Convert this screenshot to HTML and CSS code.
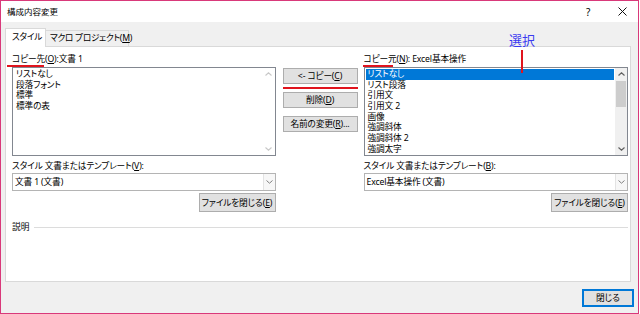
FILE: index.html
```html
<!DOCTYPE html>
<html lang="ja">
<head>
<meta charset="utf-8">
<title>構成内容変更</title>
<link rel="stylesheet" href="styles.css">
</head>
<body>
<div class="window">
  <div class="titlebar">
    <span class="title">構成内容変更</span>
    <span class="help">?</span>
    <span class="close"><svg width="9" height="9" viewBox="0 0 9 9"><path d="M0.5 0.5L8.5 8.5M8.5 0.5L0.5 8.5" stroke="#111" stroke-width="1"/></svg></span>
  </div>
  <div class="body">
    <div class="tabs">
      <div class="tab active">スタイル</div>
      <div class="tab">マクロ プロジェクト(<u>M</u>)</div>
    </div>
    <div class="panel">
      <div class="columns">
        <div class="col side">
          <div class="lbl">コピー先(<u>O</u>):文書 1</div>
          <div class="list">
            <div class="items">
              <div class="item">リストなし</div>
              <div class="item">段落フォント</div>
              <div class="item">標準</div>
              <div class="item">標準の表</div>
            </div>
            <div class="sbar disabled">
              <div class="arrow"><svg width="7" height="4" viewBox="0 0 7 4"><path d="M0.5 3.5L3.5 0.8L6.5 3.5" fill="none" stroke="#c8c8c8" stroke-width="1.1"/></svg></div>
              <div class="track"></div>
              <div class="arrow"><svg width="7" height="4" viewBox="0 0 7 4"><path d="M0.5 0.5L3.5 3.2L6.5 0.5" fill="none" stroke="#c8c8c8" stroke-width="1.1"/></svg></div>
            </div>
          </div>
          <div class="lbl2">スタイル 文書またはテンプレート(<u>V</u>):</div>
          <div class="combo">
            <span class="combo-text">文書 1 (文書)</span>
            <span class="combo-btn"><svg width="7" height="4" viewBox="0 0 7 4"><path d="M0.5 0.5L3.5 3.2L6.5 0.5" fill="none" stroke="#808080" stroke-width="1"/></svg></span>
          </div>
          <div class="btnrow"><button class="btn file">ファイルを閉じる(<u>E</u>)</button></div>
        </div>
        <div class="col mid">
          <button class="btn act">&lt;- コピー(<u>C</u>)</button>
          <button class="btn act">削除(<u>D</u>)</button>
          <button class="btn act">名前の変更(<u>R</u>)...</button>
        </div>
        <div class="col side right">
          <div class="lbl">コピー元(<u>N</u>): Excel基本操作</div>
          <div class="list">
            <div class="items">
              <div class="item sel">リストなし</div>
              <div class="item">リスト段落</div>
              <div class="item">引用文</div>
              <div class="item">引用文 2</div>
              <div class="item">画像</div>
              <div class="item">強調斜体</div>
              <div class="item">強調斜体 2</div>
              <div class="item">強調太字</div>
            </div>
            <div class="sbar">
              <div class="arrow"><svg width="7" height="4" viewBox="0 0 7 4"><path d="M0.5 3.5L3.5 0.8L6.5 3.5" fill="none" stroke="#606060" stroke-width="1.2"/></svg></div>
              <div class="track"><div class="thumb"></div></div>
              <div class="arrow"><svg width="7" height="4" viewBox="0 0 7 4"><path d="M0.5 0.5L3.5 3.2L6.5 0.5" fill="none" stroke="#606060" stroke-width="1.2"/></svg></div>
            </div>
          </div>
          <div class="lbl2">スタイル 文書またはテンプレート(<u>B</u>):</div>
          <div class="combo">
            <span class="combo-text">Excel基本操作 (文書)</span>
            <span class="combo-btn"><svg width="7" height="4" viewBox="0 0 7 4"><path d="M0.5 0.5L3.5 3.2L6.5 0.5" fill="none" stroke="#808080" stroke-width="1"/></svg></span>
          </div>
          <div class="btnrow"><button class="btn file">ファイルを閉じる(<u>E</u>)</button></div>
        </div>
      </div>
      <div class="desc">
        <span class="desc-lbl">説明</span>
        <span class="desc-line"></span>
      </div>
    </div>
    <div class="footer">
      <button class="btn closebtn">閉じる</button>
    </div>
  </div>

  <div class="mark mark-src"></div>
  <div class="mark mark-copy"></div>
  <div class="mark mark-dst"></div>
  <div class="mark mark-vert"></div>
  <div class="note">選択</div>
</div>
</body>
</html>
```

FILE: styles.css
```css
* { box-sizing: border-box; }
html, body { margin: 0; padding: 0; background: #ffffff; }
body {
  width: 640px;
  height: 314px;
  overflow: hidden;
  font-family: "Noto Sans", "Noto Sans CJK JP", sans-serif;
  font-feature-settings: "palt" 1;
  font-size: 8.7px;
  letter-spacing: -0.15px;
  color: #000;
}
u { text-decoration: underline; text-underline-offset: 1px; text-decoration-thickness: 1px; }

.window {
  position: relative;
  width: 639px;
  height: 314px;
  border: 1px solid #d9397a;
  background: #f0f0f0;
  display: flex;
  flex-direction: column;
}

.titlebar {
  height: 21px;
  background: #ffffff;
  display: flex;
  align-items: center;
  padding-left: 6px;
  flex: none;
}
.title { font-size: 8.5px; line-height: 12px; color: #000; letter-spacing: 0; }
.help { margin-left: auto; font-size: 10px; line-height: 12px; width: 8px; letter-spacing: 0; }
.close { margin-left: 24px; margin-right: 11px; width: 9px; height: 9px; display: flex; }

.body {
  flex: 1;
  padding: 6px 4px 0 4px;
  display: flex;
  flex-direction: column;
}

.tabs {
  display: flex;
  align-items: flex-end;
  height: 18px;
  flex: none;
}
.tab {
  height: 16px;
  line-height: 15px;
  width: 84px;
  padding: 0 0 0 4px;
  border: 1px solid #d9d9d9;
  border-bottom: none;
  background: #f0f0f0;
  margin-left: -1px;
  white-space: nowrap;
  letter-spacing: -0.3px;
}
.tab.active {
  position: relative;
  z-index: 1;
  height: 19px;
  margin-bottom: -1px;
  margin-left: 0;
  background: #ffffff;
  line-height: 17px;
  padding: 0 0 0 6px;
  width: 41px;
}

.panel {
  height: 236px;
  margin-right: 3px;
  background: #ffffff;
  border: 1px solid #d9d9d9;
  padding: 6px 2px 0 6px;
  flex: none;
}

.columns { display: flex; }
.col { display: flex; flex-direction: column; }
.side { width: 264px; }
.side.right { width: 265px; margin-left: 6px; }
.mid { width: 75px; margin-left: 7px; padding-top: 15px; }

.lbl { height: 14px; line-height: 12px; white-space: nowrap; }
.lbl2 { height: 14px; line-height: 14px; margin-top: 3px; white-space: nowrap; }

.list {
  height: 89px;
  border: 1px solid #828790;
  background: #fff;
  display: flex;
}
.items { flex: 1; padding: 1px; overflow: hidden; }
.item { height: 10.7px; line-height: 10.7px; padding: 0 2px; white-space: nowrap; }
.item.sel { background: #0078d7; color: #fff; }

.sbar { width: 12px; display: flex; flex-direction: column; background: #f0f0f0; }
.sbar.disabled { background: #ffffff; }
.arrow { height: 12px; display: flex; align-items: center; justify-content: center; flex: none; }
.track { flex: 1; display: flex; justify-content: center; padding-top: 1px; }
.thumb { width: 10px; height: 26px; background: #cdcdcd; }

.combo {
  height: 18px;
  border: 1px solid #b4b4b4;
  background: #fff;
  display: flex;
  align-items: center;
  padding-left: 2px;
}
.combo-text { flex: 1; line-height: 14px; white-space: nowrap; }
.combo-btn {
  width: 12px;
  height: 16px;
  border-left: 1px solid #e3e3e3;
  background: #f7f7f7;
  display: flex;
  align-items: center;
  justify-content: center;
}

.btn {
  font-family: inherit;
  font-feature-settings: "palt" 1;
  font-size: 8.7px;
  letter-spacing: -0.15px;
  color: #000;
  background: #e1e1e1;
  border: 1px solid #adadad;
  border-radius: 0;
  padding: 0;
  margin: 0;
  line-height: 14px;
  white-space: nowrap;
}
.btnrow { display: flex; justify-content: flex-end; margin-top: 2px; }
.btn.file { width: 77px; height: 19px; }
.btn.act { width: 75px; height: 16px; margin-bottom: 8px; }

.desc {
  display: flex;
  align-items: center;
  margin-top: 9px;
  height: 12px;
}
.desc-lbl { line-height: 12px; letter-spacing: 0; }
.desc-line { flex: 1; height: 1px; background: #dcdcdc; margin-left: 5px; }

.footer {
  display: flex;
  justify-content: flex-end;
  margin-top: 7px;
}
.btn.closebtn {
  width: 52px;
  height: 18px;
  letter-spacing: 0;
  border: 1px solid #0078d7;
  box-shadow: inset 0 0 0 1px #0078d7;
}

/* annotation overlays */
.mark { position: absolute; background: #e0141e; }
.mark-src { left: 6px; top: 64px; width: 37px; height: 2px; }
.mark-copy { left: 282px; top: 86px; width: 75px; height: 2px; }
.mark-dst { left: 362px; top: 64px; width: 30px; height: 2px; }
.mark-vert { left: 520px; top: 49px; width: 2px; height: 23px; }
.note {
  position: absolute;
  left: 508px;
  top: 31px;
  font-size: 13px;
  line-height: 16px;
  letter-spacing: 0;
  color: #3b3bf0;
}
```
